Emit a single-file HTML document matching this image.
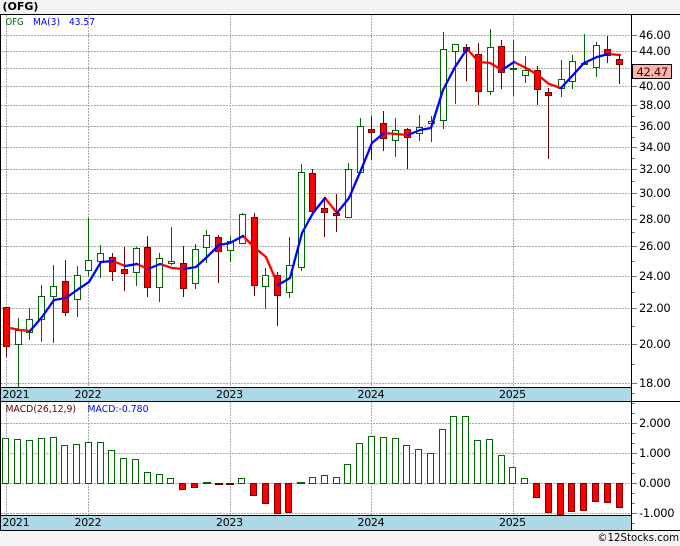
<!DOCTYPE html>
<html><head><meta charset="utf-8"><style>
html,body{margin:0;padding:0;background:#f3f3f3}
svg{display:block}
text{font-family:"DejaVu Sans",sans-serif;fill:#000}
.p{font-size:11.5px;letter-spacing:-.3px}
.d{font-size:11px;letter-spacing:-.3px}
.l{font-size:10px}
</style></head><body>
<svg xmlns="http://www.w3.org/2000/svg" width="680" height="546" viewBox="0 0 680 546">
<rect width="680" height="546" fill="#f3f3f3"/>
<rect y="14" width="680" height="517" fill="#fff"/>
<rect x="1" y="387" width="630" height="14" fill="#add8e6"/>
<rect x="1" y="515" width="630" height="15" fill="#add8e6"/>
<g shape-rendering="crispEdges">
<path fill="none" stroke="#aaa" stroke-dasharray="2 1" d="M1 35.5H632M1 51.5H632M1 68.5H632M1 86.5H632M1 105.5H632M1 126.5H632M1 147.5H632M1 169.5H632M1 193.5H632M1 219.5H632M1 246.5H632M1 276.5H632M1 308.5H632M1 344.5H632M1 383.5H632M1 423.5H632M1 453.5H632M1 483.5H632M1 513.5H632"/>
<path fill="none" stroke="#aaa" stroke-dasharray="2 1" d="M6.5 15V387M88.5 15V387M230.5 15V387M371.5 15V387M513.5 15V387M6.5 402V515M88.5 402V515M230.5 402V515M371.5 402V515M513.5 402V515"/>
<path fill="none" stroke="#006400" d="M18.5 318V387M29.5 308V340M41.5 285V342M53.5 265V343M77.5 266V317M88.5 218V276M100.5 245V278M136.5 247V286M159.5 253V302M171.5 227V265M195.5 244V289M206.5 230V263M230.5 236V262M242.5 213V243M265.5 268V309M289.5 237V298M301.5 164V271M348.5 163V217M360.5 118V172M395.5 118V157M419.5 115V141M431.5 116V142M443.5 32V129M455.5 44V104M490.5 29V95M513.5 40V96M525.5 56V83M561.5 60V97M572.5 55V89M584.5 34V65M596.5 42V77"/>
<path fill="none" stroke="#600000" d="M6.5 346V357M65.5 260V316M112.5 253V281M124.5 247V291M147.5 236V297M183.5 246V297M218.5 235V283M254.5 213V296M277.5 272V326M312.5 169V212M324.5 197V237M336.5 194V232M371.5 116V160M383.5 111V151M407.5 128V169M466.5 44V81M478.5 43V105M501.5 40V89M537.5 66V105M548.5 88V159M607.5 36V63M619.5 55V84"/>
<path fill="#fff" stroke="#006400" d="M15.5 330.5h6v14h-6zM26.5 319.5h6v13h-6zM38.5 296.5h6v23h-6zM50.5 286.5h6v10h-6zM74.5 275.5h6v24h-6zM85.5 260.5h6v10h-6zM97.5 253.5h6v8h-6zM133.5 248.5h6v24h-6zM156.5 258.5h6v29h-6zM168.5 261.5h6v2h-6zM192.5 249.5h6v34h-6zM203.5 235.5h6v12h-6zM227.5 241.5h6v9h-6zM239.5 214.5h6v29h-6zM262.5 275.5h6v11h-6zM286.5 265.5h6v27h-6zM298.5 172.5h6v95h-6zM345.5 169.5h6v48h-6zM357.5 126.5h6v46h-6zM392.5 130.5h6v10h-6zM416.5 127.5h6v6h-6zM428.5 121.5h6v2h-6zM440.5 49.5h6v71h-6zM452.5 44.5h6v7h-6zM487.5 47.5h6v44h-6zM510.5 68.5h6v1h-6zM522.5 70.5h6v5h-6zM558.5 79.5h6v9h-6zM569.5 61.5h6v20h-6zM581.5 63.5h6v1h-6zM593.5 45.5h6v22h-6z"/>
<path fill="#f00" stroke="#800000" d="M3.5 307.5h6v39h-6zM62.5 281.5h6v31h-6zM109.5 257.5h6v14h-6zM121.5 269.5h6v4h-6zM144.5 247.5h6v40h-6zM180.5 263.5h6v25h-6zM215.5 237.5h6v14h-6zM251.5 217.5h6v68h-6zM274.5 275.5h6v20h-6zM309.5 173.5h6v38h-6zM321.5 208.5h6v4h-6zM333.5 213.5h6v2h-6zM368.5 129.5h6v3h-6zM380.5 123.5h6v15h-6zM404.5 129.5h6v8h-6zM463.5 47.5h6v4h-6zM475.5 54.5h6v37h-6zM498.5 46.5h6v26h-6zM534.5 70.5h6v19h-6zM545.5 92.5h6v3h-6zM604.5 49.5h6v6h-6zM616.5 59.5h6v5h-6z"/>
<!-- MACD histogram -->
<path fill="#fff" stroke="#006400" d="M2.5 438.5h6V483.5h-6zM14.5 439.5h6V483.5h-6zM26.5 440.5h6V483.5h-6zM38.5 438.5h6V483.5h-6zM50.5 437.5h6V483.5h-6zM61.5 445.5h6V483.5h-6zM73.5 444.5h6V483.5h-6zM85.5 442.5h6V483.5h-6zM97.5 442.5h6V483.5h-6zM108.5 450.5h6V483.5h-6zM120.5 458.5h6V483.5h-6zM132.5 459.5h6V483.5h-6zM144.5 472.5h6V483.5h-6zM156.5 474.5h6V483.5h-6zM167.5 478.5h6V483.5h-6zM238.5 478.5h6V483.5h-6zM309.5 477.5h6V483.5h-6zM321.5 475.5h6V483.5h-6zM333.5 477.5h6V483.5h-6zM344.5 464.5h6V483.5h-6zM356.5 443.5h6V483.5h-6zM368.5 436.5h6V483.5h-6zM380.5 437.5h6V483.5h-6zM392.5 438.5h6V483.5h-6zM403.5 445.5h6V483.5h-6zM415.5 449.5h6V483.5h-6zM427.5 453.5h6V483.5h-6zM439.5 429.5h6V483.5h-6zM450.5 416.5h6V483.5h-6zM462.5 416.5h6V483.5h-6zM474.5 440.5h6V483.5h-6zM486.5 439.5h6V483.5h-6zM498.5 455.5h6V483.5h-6zM509.5 467.5h6V483.5h-6zM521.5 478.5h6V483.5h-6z"/>
<path fill="#f00" stroke="#800000" d="M179.5 483.5h6V489.5h-6zM191.5 483.5h6V487.5h-6zM250.5 483.5h6V495.5h-6zM262.5 483.5h6V503.5h-6zM274.5 483.5h6V513.5h-6zM285.5 483.5h6V512.5h-6zM533.5 483.5h6V497.5h-6zM545.5 483.5h6V512.5h-6zM557.5 483.5h6V515h-6zM568.5 483.5h6V511.5h-6zM580.5 483.5h6V510.5h-6zM592.5 483.5h6V501.5h-6zM604.5 483.5h6V502.5h-6zM616.5 483.5h6V507.5h-6z"/>
<rect x="203" y="482" width="8" height="2" fill="#006400"/>
<rect x="297" y="482" width="8" height="2" fill="#006400"/>
<rect x="215" y="483" width="8" height="2" fill="#600000"/>
<rect x="226" y="483" width="8" height="2" fill="#600000"/>
<!-- frame -->
<path fill="none" stroke="#000" d="M0 14.5H680M1 387.5H631M0 401.5H680M1 515.5H631M0 530.5H680M0.5 14V531M631.5 14V531"/>
<!-- ticks -->
<path fill="none" stroke="#777" d="M632 35.5h5M632 51.5h5M632 86.5h5M632 105.5h5M632 126.5h5M632 147.5h5M632 169.5h5M632 193.5h5M632 219.5h5M632 246.5h5M632 276.5h5M632 308.5h5M632 344.5h5M632 383.5h5M632 423.5h5M632 453.5h5M632 483.5h5M632 513.5h5"/>
<path fill="none" stroke="#777" d="M632 116.5h3M632 137.5h3M632 158.5h3M632 181.5h3M632 206.5h3M632 232.5h3M632 261.5h3M632 292.5h3M632 326.5h3M632 364.5h3M632 393.5h3M632 403.5h3M632 413.5h3M632 433.5h3M632 443.5h3M632 463.5h3M632 473.5h3M632 493.5h3M632 503.5h3M632 523.5h3"/>
<rect x="632.5" y="64.5" width="39" height="14" fill="#ffb4ac" stroke="#000"/>
</g>
<!-- moving average -->
<g fill="none" stroke-width="2.3" stroke-linejoin="round" stroke-linecap="round">
<path stroke="#f00" d="M10 328L20 330L30 331M113 261L125 266M137 264L148 269M160 264L172 268L184 269M243 236L255 248L266 257L278 285M325 198L337 213M384 133L396 134L408 135M467 49L479 62L490 63L502 70M514 62L526 68L538 75L549 84L561 88M608 54L620 55"/>
<path stroke="#00f" d="M30 331L42 317L54 300L66 298L77 290L89 282L101 262L113 261M125 266L137 264M148 269L160 264M184 269L196 267L207 257L219 245L230 243L243 236M278 285L290 278L302 233L313 213L325 198M337 213L349 198L361 170L372 143L384 133M408 135L420 130L431 128L443 90L455 67L467 49M502 70L514 62M561 88L573 75L584 63L597 57L608 54"/>
</g>
<!-- labels -->
<text x="2.5" y="10" style="font-size:11px;font-weight:bold">(OFG)</text>
<text class="l" x="5.5" y="25" textLength="18" lengthAdjust="spacingAndGlyphs" style="fill:#006400">OFG</text>
<text class="l" x="33" y="25" textLength="27" lengthAdjust="spacingAndGlyphs" style="fill:#00f">MA(3)</text>
<text class="l" x="69" y="25" textLength="26" lengthAdjust="spacingAndGlyphs" style="fill:#00f">43.57</text>
<text class="l" x="5.5" y="412" textLength="70.5" lengthAdjust="spacingAndGlyphs" style="fill:#600000">MACD(26,12,9)</text>
<text class="l" x="87.5" y="412" textLength="61" lengthAdjust="spacingAndGlyphs" style="fill:#00f">MACD:-0.780</text>
<g class="p">
<text x="639" y="39">46.00</text>
<text x="639" y="55">44.00</text>
<text x="639" y="90">40.00</text>
<text x="639" y="109">38.00</text>
<text x="639" y="130">36.00</text>
<text x="639" y="151">34.00</text>
<text x="639" y="173">32.00</text>
<text x="639" y="197">30.00</text>
<text x="639" y="223">28.00</text>
<text x="639" y="250">26.00</text>
<text x="639" y="280">24.00</text>
<text x="639" y="312">22.00</text>
<text x="639" y="348">20.00</text>
<text x="639" y="387">18.00</text>
<text x="636.5" y="76" style="fill:#400">42.47</text>
<text x="639" y="427">2.000</text>
<text x="639" y="457">1.000</text>
<text x="639" y="487">0.000</text>
<text x="639" y="517">-1.000</text>
</g>
<g class="d">
<text x="2.5" y="398">2021</text><text x="74.5" y="398">2022</text><text x="216" y="398">2023</text><text x="357.5" y="398">2024</text><text x="499" y="398">2025</text>
<text x="2.5" y="526">2021</text><text x="74.5" y="526">2022</text><text x="216" y="526">2023</text><text x="357.5" y="526">2024</text><text x="499" y="526">2025</text>
</g>
<text x="679" y="541" text-anchor="end" style="font-size:10.2px">©12Stocks.com</text>
</svg>
</body></html>
